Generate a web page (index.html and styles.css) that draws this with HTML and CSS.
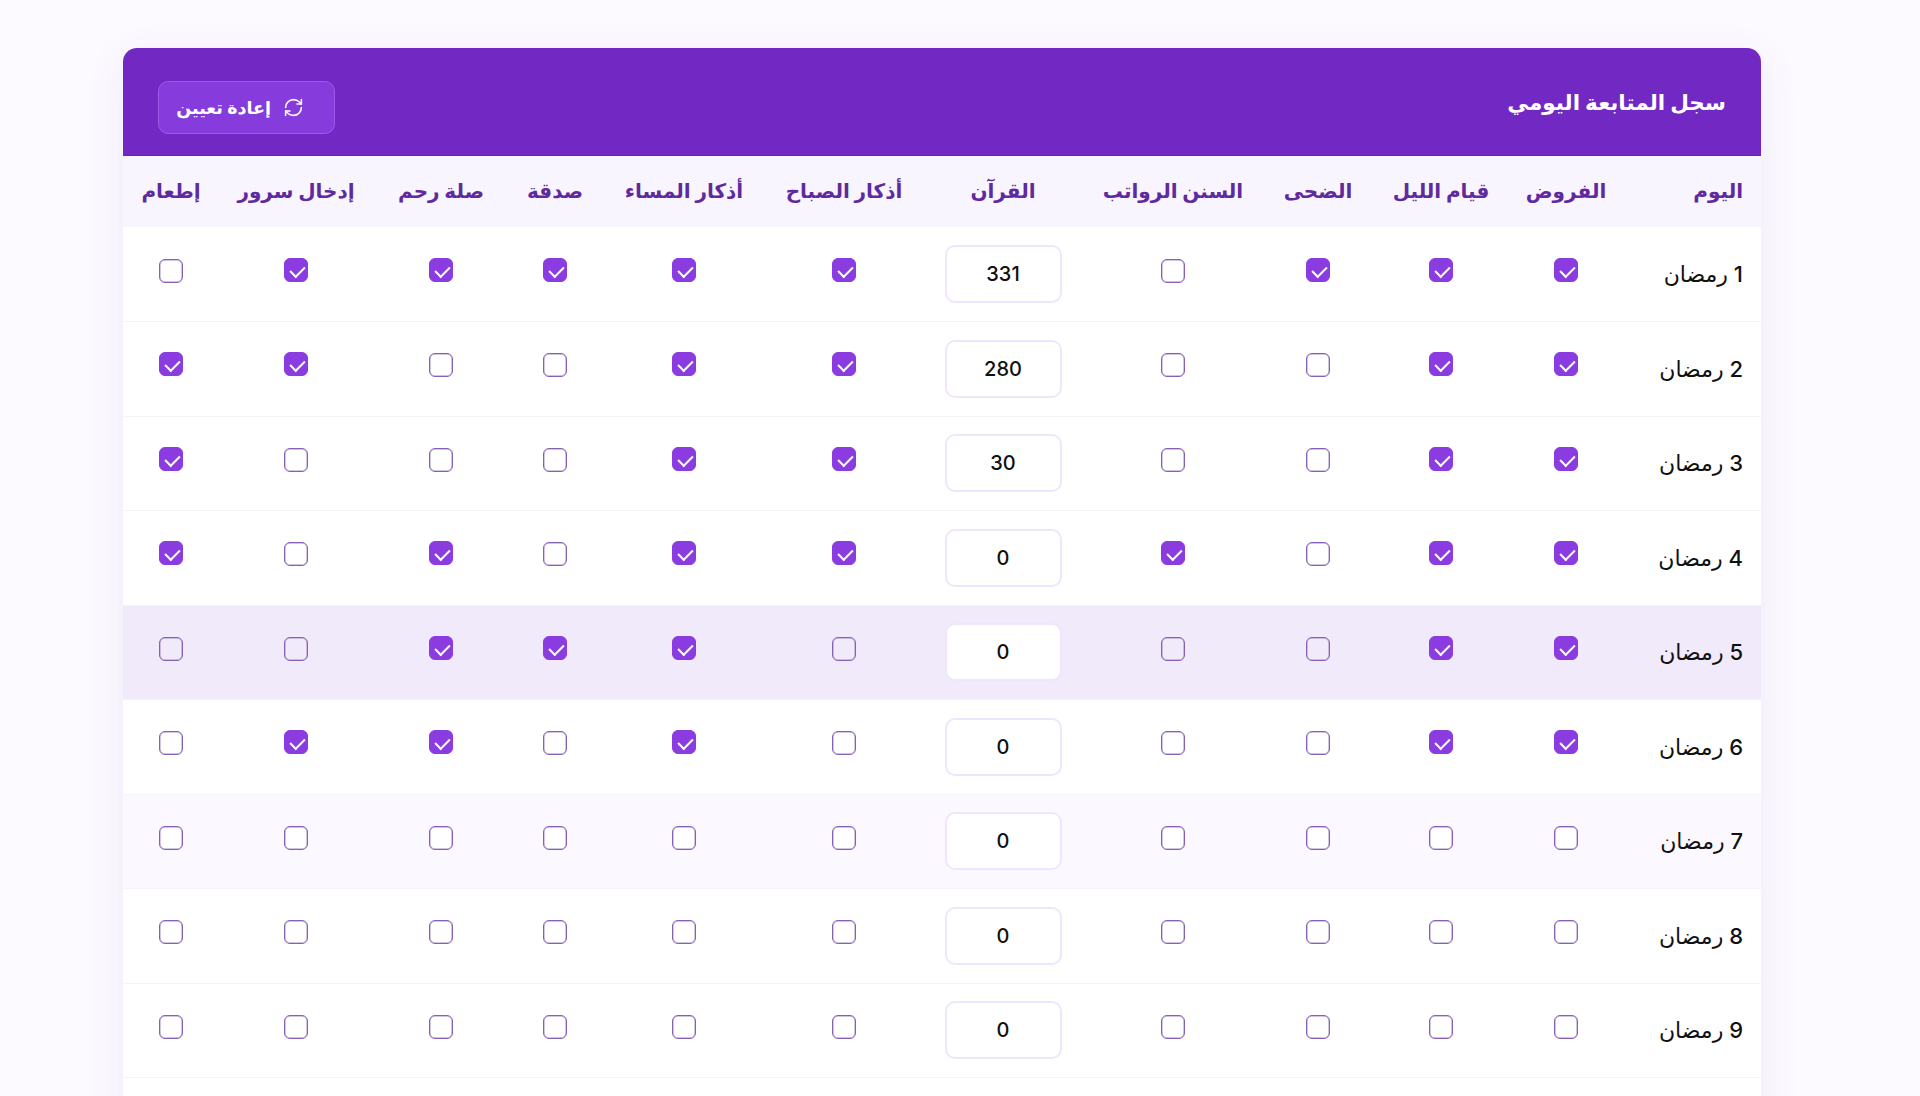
FILE: index.html
```html
<!DOCTYPE html>
<html lang="ar" dir="rtl">
<head>
  <meta charset="UTF-8">
  <meta name="viewport" content="width=device-width, initial-scale=1.0">
  <title>سجل المتابعة اليومي</title>
  <link rel="stylesheet" href="styles.css">
</head>
<body>
  <div id="card">
    <div id="card-head">
      <h2>سجل المتابعة اليومي</h2>
      <button id="reset">
        <svg width="21" height="21" viewBox="0 0 24 24" fill="none" stroke="currentColor" stroke-width="1.8" stroke-linecap="round" stroke-linejoin="round">
          <path d="M3 12a9 9 0 0 1 9-9 9.75 9.75 0 0 1 6.74 2.74L21 8"/>
          <path d="M21 3v5h-5"/>
          <path d="M21 12a9 9 0 0 1-9 9 9.75 9.75 0 0 1-6.74-2.74L3 16"/>
          <path d="M8 16H3v5"/>
        </svg>
        إعادة تعيين
      </button>
    </div>
    <table id="log">
      <colgroup>
        <col><col><col><col><col><col><col><col><col><col><col><col>
      </colgroup>
      <thead>
        <tr>
          <th>اليوم</th>
          <th>الفروض</th>
          <th>قيام الليل</th>
          <th>الضحى</th>
          <th>السنن الرواتب</th>
          <th>القرآن</th>
          <th>أذكار الصباح</th>
          <th>أذكار المساء</th>
          <th>صدقة</th>
          <th>صلة رحم</th>
          <th>إدخال سرور</th>
          <th>إطعام</th>
        </tr>
      </thead>
      <tbody>
        <tr>
          <td>1 رمضان</td>
          <td><input type="checkbox" checked></td>
          <td><input type="checkbox" checked></td>
          <td><input type="checkbox" checked></td>
          <td><input type="checkbox"></td>
          <td><input type="number" value="331"></td>
          <td><input type="checkbox" checked></td>
          <td><input type="checkbox" checked></td>
          <td><input type="checkbox" checked></td>
          <td><input type="checkbox" checked></td>
          <td><input type="checkbox" checked></td>
          <td><input type="checkbox"></td>
        </tr>
        <tr>
          <td>2 رمضان</td>
          <td><input type="checkbox" checked></td>
          <td><input type="checkbox" checked></td>
          <td><input type="checkbox"></td>
          <td><input type="checkbox"></td>
          <td><input type="number" value="280"></td>
          <td><input type="checkbox" checked></td>
          <td><input type="checkbox" checked></td>
          <td><input type="checkbox"></td>
          <td><input type="checkbox"></td>
          <td><input type="checkbox" checked></td>
          <td><input type="checkbox" checked></td>
        </tr>
        <tr>
          <td>3 رمضان</td>
          <td><input type="checkbox" checked></td>
          <td><input type="checkbox" checked></td>
          <td><input type="checkbox"></td>
          <td><input type="checkbox"></td>
          <td><input type="number" value="30"></td>
          <td><input type="checkbox" checked></td>
          <td><input type="checkbox" checked></td>
          <td><input type="checkbox"></td>
          <td><input type="checkbox"></td>
          <td><input type="checkbox"></td>
          <td><input type="checkbox" checked></td>
        </tr>
        <tr>
          <td>4 رمضان</td>
          <td><input type="checkbox" checked></td>
          <td><input type="checkbox" checked></td>
          <td><input type="checkbox"></td>
          <td><input type="checkbox" checked></td>
          <td><input type="number" value="0"></td>
          <td><input type="checkbox" checked></td>
          <td><input type="checkbox" checked></td>
          <td><input type="checkbox"></td>
          <td><input type="checkbox" checked></td>
          <td><input type="checkbox"></td>
          <td><input type="checkbox" checked></td>
        </tr>
        <tr class="today">
          <td>5 رمضان</td>
          <td><input type="checkbox" checked></td>
          <td><input type="checkbox" checked></td>
          <td><input type="checkbox"></td>
          <td><input type="checkbox"></td>
          <td><input type="number" value="0"></td>
          <td><input type="checkbox"></td>
          <td><input type="checkbox" checked></td>
          <td><input type="checkbox" checked></td>
          <td><input type="checkbox" checked></td>
          <td><input type="checkbox"></td>
          <td><input type="checkbox"></td>
        </tr>
        <tr>
          <td>6 رمضان</td>
          <td><input type="checkbox" checked></td>
          <td><input type="checkbox" checked></td>
          <td><input type="checkbox"></td>
          <td><input type="checkbox"></td>
          <td><input type="number" value="0"></td>
          <td><input type="checkbox"></td>
          <td><input type="checkbox" checked></td>
          <td><input type="checkbox"></td>
          <td><input type="checkbox" checked></td>
          <td><input type="checkbox" checked></td>
          <td><input type="checkbox"></td>
        </tr>
        <tr class="tint">
          <td>7 رمضان</td>
          <td><input type="checkbox"></td>
          <td><input type="checkbox"></td>
          <td><input type="checkbox"></td>
          <td><input type="checkbox"></td>
          <td><input type="number" value="0"></td>
          <td><input type="checkbox"></td>
          <td><input type="checkbox"></td>
          <td><input type="checkbox"></td>
          <td><input type="checkbox"></td>
          <td><input type="checkbox"></td>
          <td><input type="checkbox"></td>
        </tr>
        <tr>
          <td>8 رمضان</td>
          <td><input type="checkbox"></td>
          <td><input type="checkbox"></td>
          <td><input type="checkbox"></td>
          <td><input type="checkbox"></td>
          <td><input type="number" value="0"></td>
          <td><input type="checkbox"></td>
          <td><input type="checkbox"></td>
          <td><input type="checkbox"></td>
          <td><input type="checkbox"></td>
          <td><input type="checkbox"></td>
          <td><input type="checkbox"></td>
        </tr>
        <tr>
          <td>9 رمضان</td>
          <td><input type="checkbox"></td>
          <td><input type="checkbox"></td>
          <td><input type="checkbox"></td>
          <td><input type="checkbox"></td>
          <td><input type="number" value="0"></td>
          <td><input type="checkbox"></td>
          <td><input type="checkbox"></td>
          <td><input type="checkbox"></td>
          <td><input type="checkbox"></td>
          <td><input type="checkbox"></td>
          <td><input type="checkbox"></td>
        </tr>
        <tr>
          <td></td>
          <td><input type="checkbox"></td>
          <td><input type="checkbox"></td>
          <td><input type="checkbox"></td>
          <td><input type="checkbox"></td>
          <td><input type="number"></td>
          <td><input type="checkbox"></td>
          <td><input type="checkbox"></td>
          <td><input type="checkbox"></td>
          <td><input type="checkbox"></td>
          <td><input type="checkbox"></td>
          <td><input type="checkbox"></td>
        </tr>
      </tbody>
    </table>
  </div>
</body>
</html>
```

FILE: styles.css
```css
*{
  box-sizing: border-box;
}
html{
  height: 100%;
  overflow: hidden;
}
body{
  height: 100%;
  margin: 0;
  padding: 48px 159px 0 123px;
  overflow: hidden;
  background: #fcfaff;
  color: #111;
  font-family: Inter, "Noto Sans", "DejaVu Sans", sans-serif;
}
#card{
  background: #fff;
  border-radius: 14px 14px 0 0;
  box-shadow: 0 10px 40px rgba(90, 40, 160, 0.08);
}
#card-head{
  display: flex;
  justify-content: space-between;
  align-items: center;
  height: 108px;
  padding: 33px 35px 22px;
  background: #7229c4;
  border-bottom: 1px solid #6a22ba;
  border-radius: 14px 14px 0 0;
  color: #fff;
}
#card-head h2{
  margin: 0 0 10px;
  font-size: 21.5px;
  font-weight: 700;
}
#reset{
  display: flex;
  align-items: center;
  gap: 12px;
  width: 177px;
  height: 53px;
  padding: 0 30px 0 16px;
  background: #863bdd;
  border: 1px solid #9a5ae6;
  border-radius: 10px;
  color: #fff;
  font: inherit;
  font-size: 17.5px;
  font-weight: 600;
  white-space: nowrap;
}
#reset svg{
  flex-shrink: 0;
}
#log{
  width: 1638px;
  table-layout: fixed;
  border-collapse: collapse;
}
col:nth-child(1){ width: 136px; }
col:nth-child(2){ width: 118px; }
col:nth-child(3){ width: 132px; }
col:nth-child(4){ width: 114px; }
col:nth-child(5){ width: 176px; }
col:nth-child(6){ width: 164px; }
col:nth-child(7){ width: 154px; }
col:nth-child(8){ width: 166px; }
col:nth-child(9){ width: 92px; }
col:nth-child(10){ width: 136px; }
col:nth-child(11){ width: 154px; }
col:nth-child(12){ width: 96px; }
th{
  height: 71px;
  padding: 0 0 2px;
  background: #f8f5ff;
  color: #5f2a9e;
  font-size: 20px;
  font-weight: 700;
  text-align: center;
}
th:first-child, td:first-child{
  padding-right: 18px;
  text-align: right;
}
td{
  height: 94.5px;
  padding: 0;
  border-bottom: 1px solid #f5f2f9;
  font-size: 22px;
  font-weight: 500;
  text-align: center;
}
.today td{
  background: #f1eafb;
}
.tint td{
  background: #fbf9ff;
}
input[type=number]{
  width: 117px;
  height: 58px;
  background: #fff;
  border: 2px solid #efe6fd;
  border-radius: 10px;
  color: #111;
  font: inherit;
  font-size: 20px;
  text-align: center;
  appearance: textfield;
}
input[type=number]::-webkit-inner-spin-button{
  appearance: none;
}
input[type=checkbox]{
  position: relative;
  width: 24px;
  height: 24px;
  margin: 0 0 7px;
  vertical-align: middle;
  background: #fff;
  border: 1px solid #8560b5;
  border-radius: 6px;
  box-shadow: inset 0 0 0 0.5px #a68bc9;
  appearance: none;
}
.today input[type=checkbox]:not(:checked){
  background: transparent;
}
input[type=checkbox]:checked{
  top: -1px;
  background: #8a3ce0;
  border-color: #8a3ce0;
  box-shadow: none;
}
input[type=checkbox]:checked::after{
  content: "";
  position: absolute;
  left: 8px;
  top: 4px;
  width: 7px;
  height: 12px;
  border: solid #fff;
  border-width: 0 2px 2px 0;
  transform: rotate(45deg);
}
```
